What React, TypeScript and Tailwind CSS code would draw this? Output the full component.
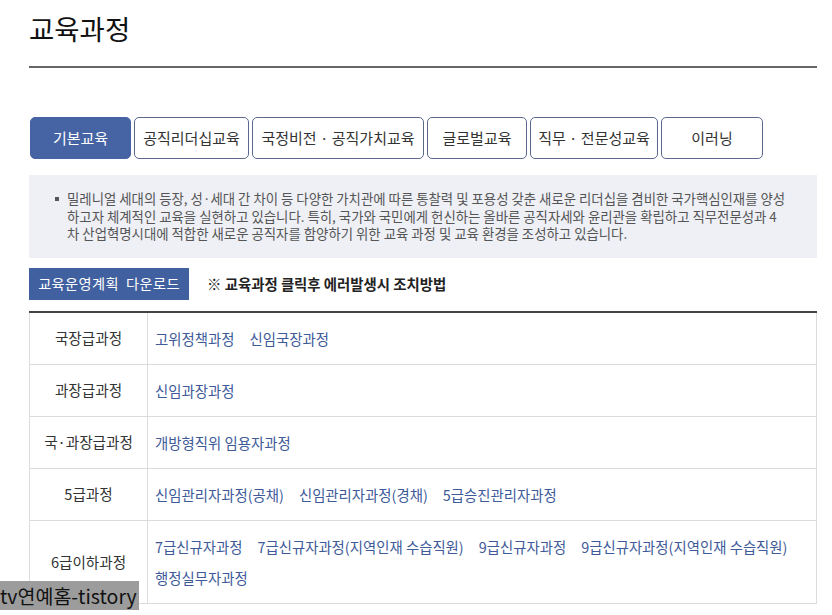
import React from "react";

const tabs = [
  { label: "기본교육", width: "w-[101px]", active: true },
  { label: "공직리더십교육", width: "w-[115px]" },
  { label: "국정비전 · 공직가치교육", width: "w-[172px]" },
  { label: "글로벌교육", width: "w-[100px]" },
  { label: "직무 · 전문성교육", width: "w-[128px]" },
  { label: "이러닝", width: "w-[102px]" },
];

const rows = [
  { name: "국장급과정", links: ["고위정책과정", "신임국장과정"] },
  { name: "과장급과정", links: ["신임과장과정"] },
  { name: "국·과장급과정", links: ["개방형직위 임용자과정"] },
  { name: "5급과정", links: ["신임관리자과정(공채)", "신임관리자과정(경채)", "5급승진관리자과정"] },
  {
    name: "6급이하과정",
    links: [
      "7급신규자과정",
      "7급신규자과정(지역인재 수습직원)",
      "9급신규자과정",
      "9급신규자과정(지역인재 수습직원)",
      "행정실무자과정",
    ],
  },
];

export default function App() {
  return (
    <div className="relative h-[615px] w-[832px] overflow-hidden bg-white font-['Noto_Sans_CJK_KR',sans-serif] text-[#222]">
      <div className="ml-[29px] w-[788px]">
        <h1 className="pt-[10px] text-[27.5px] leading-[36px] font-normal text-[#111]">교육과정</h1>
        <div className="mt-[20px] h-[2px] bg-[#666]" />

        <div className="mt-[49px] flex gap-[3px] pl-px">
          {tabs.map((t) => (
            <div
              key={t.label}
              className={`flex h-[42px] items-center justify-center rounded-[5px] border text-[15px] ${t.width} ${
                t.active ? "border-[#4664a4] bg-[#4664a4] text-white" : "border-[#5b6a8c] bg-white text-[#333]"
              }`}
            >
              {t.label}
            </div>
          ))}
        </div>

        <div className="mt-[16px] flex bg-[#eef0f5] py-[15px] pr-[10px] pl-[26px] text-[13.4px] leading-[17.5px] text-[#555]">
          <span className="mt-[7px] mr-[8px] h-[4px] w-[4px] shrink-0 bg-[#555]" />
          <p className="whitespace-nowrap">
            밀레니얼 세대의 등장, 성·세대 간 차이 등 다양한 가치관에 따른 통찰력 및 포용성 갖춘 새로운 리더십을 겸비한 국가핵심인재를 양성
            <br />
            하고자 체계적인 교육을 실현하고 있습니다. 특히, 국가와 국민에게 헌신하는 올바른 공직자세와 윤리관을 확립하고 직무전문성과 4
            <br />
            차 산업혁명시대에 적합한 새로운 공직자를 함양하기 위한 교육 과정 및 교육 환경을 조성하고 있습니다.
          </p>
        </div>

        <div className="mt-[10px] flex items-center">
          <div className="flex h-[32px] w-[160px] items-center justify-center bg-[#4160a0] text-[14.2px] tracking-[0.4px] text-white">
            교육운영계획&nbsp; 다운로드
          </div>
          <span className="ml-[18px] text-[14.4px] font-bold text-[#222]">※ 교육과정 클릭후 에러발생시 조치방법</span>
        </div>

        <div className="mt-[11px] border-t-2 border-[#444]">
          {rows.map((r, i) => (
            <div
              key={r.name}
              className={`flex border-r border-b border-l border-[#dcdcdc] ${i === 4 ? "min-h-[82px]" : "h-[52px]"}`}
            >
              <div className="flex w-[118px] shrink-0 items-center justify-center border-r border-[#dcdcdc] text-[14.6px] text-[#333]">
                {r.name}
              </div>
              <div className="flex flex-1 flex-wrap content-center items-center py-[10px] pl-[7px] text-[14.4px] leading-[31px] text-[#3e5a99]">
                {r.links.map((l) => (
                  <span key={l} className="mr-[15px]">
                    {l}
                  </span>
                ))}
              </div>
            </div>
          ))}
        </div>
      </div>

      <div className="absolute bottom-[5px] left-0 flex h-[29px] w-[139px] items-center overflow-hidden whitespace-nowrap bg-[#9c9c9c] text-[19.5px] text-[#111]">
        tv연예홈-tistory
      </div>
    </div>
  );
}
